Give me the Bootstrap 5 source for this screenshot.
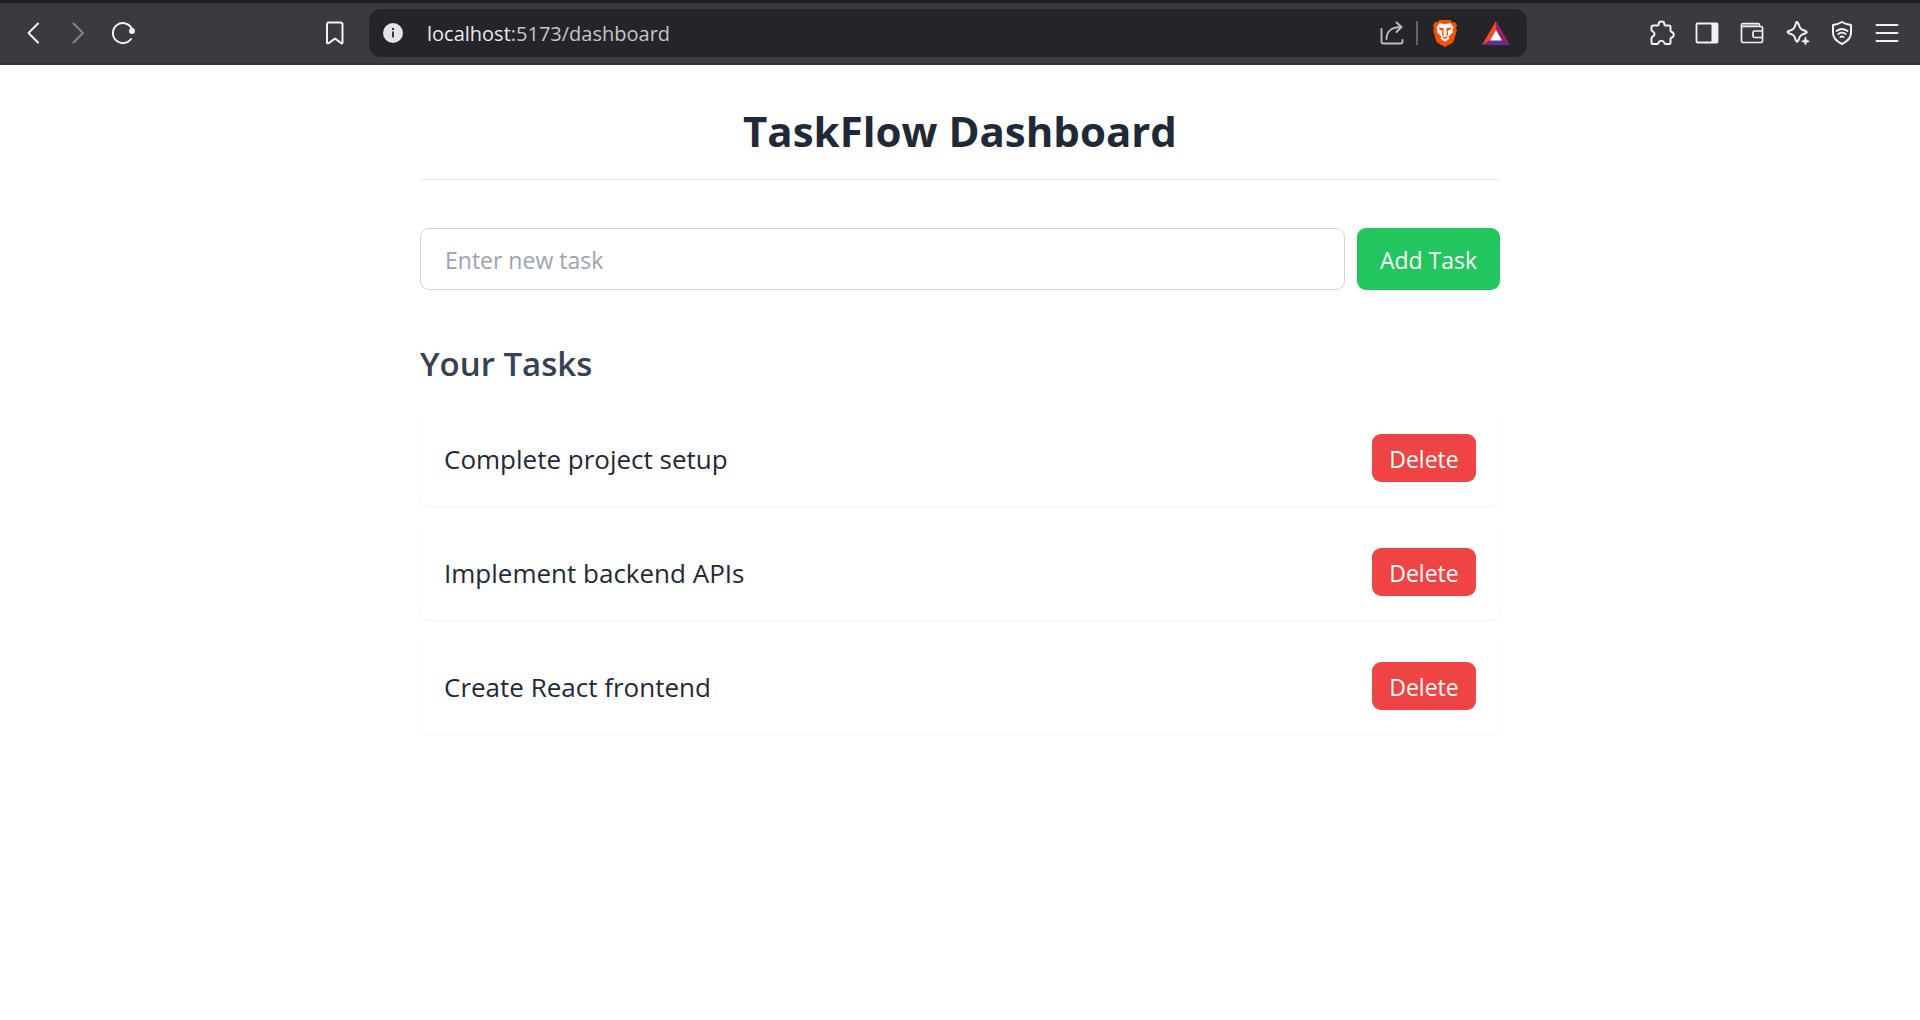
<!DOCTYPE html>
<html lang="en">
<head>
<meta charset="utf-8">
<meta name="viewport" content="width=device-width, initial-scale=1">
<title>TaskFlow Dashboard</title>
<link href="https://cdn.jsdelivr.net/npm/bootstrap@5.3.0/dist/css/bootstrap.min.css" rel="stylesheet">
<style>
  body { font-family: "Open Sans", "Noto Sans", sans-serif; background: #fff; color: #1f2937; }
  .browser-bar { height: 65px; padding: 0 11px 0 10px; background: #3b3a3f; border-top: 3px solid #1f1e23; border-bottom: 2px solid #33323a; }
  .tool-btn { width: 45px; height: 45px; color: #f2f1f5; background: none; border: 0; padding: 0; display: flex; align-items: center; justify-content: center; flex: none; }
  .tool-btn:disabled { color: #85848a; }
  .address-zone { margin: 0 112px 0 167px; gap: 12px; min-width: 0; }
  .address-bar { height: 48px; border-radius: 12px; background: #252429; padding: 0 17px 0 14px; min-width: 0; }
  .address-text { color: #c5c4ca; font-size: 20px; line-height: 28px; padding-top: 2px; }
  .address-host { color: #e9e8ee; }
  .bar-split { width: 2px; height: 24px; margin: 0 14px 0 12px; background: #66656b; }
  .stroke-icon { fill: none; stroke: currentColor; stroke-width: 2; stroke-linecap: round; stroke-linejoin: round; }
  .page-main { max-width: 1080px; padding-top: 36px; }
  .page-head { border-bottom: 1px solid #e5e7eb; padding-bottom: 18px; margin-bottom: 48px; }
  .page-title { font-size: 42px; line-height: 60px; font-weight: 700; margin: 0; }
  .task-form { gap: 12px; margin-bottom: 48px; }
  .task-input { height: 62px; padding: 2px 24px 0; font-size: 23px; border: 1px solid #d1d5db; border-radius: 9px; color: #1f2937; }
  .task-input::placeholder { color: #9ca3af; }
  .add-btn { width: 143px; height: 62px; padding: 2px 0 0; font-size: 23px; border: 0; border-radius: 9px; background: #22c55e; color: #fff; }
  .section-title { font-size: 33px; line-height: 48px; font-weight: 600; color: #374151; margin: 0; padding: 2px 0 22px; }
  .task-list { gap: 18px; }
  .task-card { height: 96px; padding: 0 24px; border-radius: 9px; background: #fff; box-shadow: 0 1px 3px rgba(0,0,0,.05); font-size: 26px; line-height: 36px; }
  .task-name { padding-top: 2px; }
  .delete-btn { width: 104px; height: 48px; padding: 2px 0 0; font-size: 23px; border: 0; border-radius: 9px; background: #ef4444; color: #fff; }
  .add-btn:hover, .delete-btn:hover { color: #fff; filter: brightness(.94); }
</style>
<script src="https://cdn.jsdelivr.net/npm/bootstrap@5.3.0/dist/js/bootstrap.bundle.min.js" defer></script>
</head>
<body>
<header class="browser-bar d-flex align-items-center">
  <div class="d-flex">
    <button class="tool-btn" type="button" aria-label="Back"><svg class="stroke-icon" width="24" height="24" viewBox="0 0 24 24"><path d="M17 2.500 7.500 12l9.500 9.500"/></svg></button>
    <button class="tool-btn" type="button" aria-label="Forward" disabled><svg class="stroke-icon" width="24" height="24" viewBox="0 0 24 24"><path d="M7.500 2.500 17 12l-9.500 9.500"/></svg></button>
    <button class="tool-btn" type="button" aria-label="Reload"><svg class="stroke-icon" width="26" height="26" viewBox="0 0 26 26"><path d="M21.500 8A10 10 0 1 0 21 19"/><circle cx="22" cy="11" r="2.200" fill="currentColor" stroke-width="1.500"/></svg></button>
  </div>
  <div class="address-zone d-flex align-items-center flex-grow-1">
    <button class="tool-btn" type="button" aria-label="Bookmark"><svg class="stroke-icon" width="24" height="24" viewBox="0 0 24 24"><path d="M5.500 1.500h12q2 0 2 2v18q0 1.500-1.300.6L12 17.500l-6.200 4.600q-1.800.9-1.800-.6v-18q0-2 1.500-2z"/></svg></button>
    <div class="address-bar d-flex align-items-center flex-grow-1">
      <button class="border-0 bg-transparent p-0 d-flex me-4" type="button" aria-label="Site information"><svg width="20" height="20" viewBox="0 0 20 20"><circle cx="10" cy="10" r="10" fill="#e4e3e9"/><path d="M9 8.500h2v6H9zM9 5h2v2H9z" fill="#39383e"/></svg></button>
      <div class="address-text flex-grow-1 text-nowrap"><a class="text-reset text-decoration-none" href="#"><span class="address-host">localhost</span>:5173/dashboard</a></div>
      <div class="d-flex align-items-center">
        <button class="border-0 bg-transparent p-0 d-flex" type="button" aria-label="Share"><svg width="24" height="24" viewBox="0 0 24 24" fill="none" stroke="#bdbcc2" stroke-width="1.900" stroke-linecap="round" stroke-linejoin="round"><path d="M1.500 8v12.500q0 2 2 2h17q2 0 2-2V19M6.500 18c0-7 4.500-12 14.500-12M16.500 1.500 21.500 6l-5 5"/></svg></button>
        <span class="bar-split"></span>
        <button class="border-0 bg-transparent p-0 d-flex me-2" type="button" aria-label="Brave Shields"><svg width="26" height="28" viewBox="0 0 26 28"><path d="M7.500 1h11l2 2.200 2.500-.3 2 3.600-1 2.500.8 2.500-3 10.500q-.5 1.300-2 2.300L13 28l-6.800-3.700q-1.500-1-2-2.300L1.200 11.500 2 9 1 6.500 3 2.900l2.500.3z" fill="#fb4f06"/><path d="m13 5 5.500-.8 3 4-1 3 .5 2-4.500 4.300 1 2.300-4.500 3-4.500-3 1-2.300L5 13.200l.5-2-1-3 3-4z" fill="#fff"/><path d="m6.500 8.500 4.500.6.800 1-.6 4.400.8 1.500-1.500.8-.7-2 .5-3-2.800-1.300zM19.500 8.500l-4.500.6-.8 1 .6 4.400-.8 1.500 1.500.8.700-2-.5-3 2.800-1.300zM10 17l3 1.200 3-1.200-.7 1.600L13 20l-2.300-1.400z" fill="#fb4f06"/></svg></button>
        <button class="border-0 bg-transparent p-0 d-flex ms-3" type="button" aria-label="Brave Rewards"><svg width="28" height="24" viewBox="0 0 28 24"><path d="M14 0v9L8 19.500 0 24z" fill="#ff4724"/><path d="M14 0v9l6 10.500 8 4.500z" fill="#9e1f63"/><path d="m0 24 9-5h10l9 5z" fill="#662d91"/><path d="m14 9 6 10.500H8z" fill="#fff"/></svg></button>
      </div>
    </div>
  </div>
  <div class="d-flex">
    <button class="tool-btn" type="button" aria-label="Extensions"><svg class="stroke-icon" width="26" height="26" viewBox="0 0 26 26"><path d="M4 5.500h4.500c1 0 1.200-.6 1.200-1.500 0-3.200 5.600-3.200 5.600 0 0 .9.200 1.500 1.200 1.500H20q1.500 0 1.500 1.500v3.500c0 1 .4 1.300 1.200 1.500 2.700.8 2.700 4.700 0 5.500-.8.200-1.200.5-1.200 1.500v3.500q0 1.500-1.500 1.500h-3.500c-.8 0-1-.5-1.300-1.300-1-2.700-4.700-2.700-5.700 0-.3.800-.5 1.300-1.300 1.300H4q-1.500 0-1.500-1.500V18c0-.8.500-1 1.200-1.300 2.400-1 2.400-4.400 0-5.400-.7-.3-1.200-.5-1.200-1.300V7Q2.500 5.500 4 5.500z"/></svg></button>
    <button class="tool-btn" type="button" aria-label="Side panel"><svg width="24" height="22" viewBox="0 0 24 22"><rect x="1.500" y="1.500" width="21" height="19" rx="1" fill="none" stroke="currentColor" stroke-width="1.800"/><path d="M16.500 1H23v20h-6.500z" fill="currentColor"/></svg></button>
    <button class="tool-btn" type="button" aria-label="Wallet"><svg class="stroke-icon" width="24" height="22" viewBox="0 0 24 22"><path d="M1.500 4.500V19q0 1.500 1.500 1.500h18q1.500 0 1.500-1.500V6q0-1.500-1.500-1.500zM1.500 4.500V3q0-1.500 1.500-1.500h15q1.500 0 1.500 1.500v1.500M22 9h-7.500Q13 9 13 10.500V14q0 1.500 1.500 1.500H22" stroke-width="1.700"/><path d="M3 3h15" stroke="#a5a4aa"/></svg></button>
    <button class="tool-btn" type="button" aria-label="Leo AI"><svg class="stroke-icon" width="26" height="26" viewBox="0 0 26 26"><path d="M12 2.500q1.500-1.500 2.500 1.500c1.500 5 2.500 5.500 7 7q2.500 1.200 0 2.200c-4.500 1.500-5.500 2-7 7q-1.200 3-2.700 0c-1.500-5-2.500-5.500-7-7q-2.500-1.200 0-2.200c4.500-1.500 5.500-2 7-7z"/><path d="m21.500 17 1.200 3 2.800 1.200-2.800 1.200-1.200 2.800-1.200-2.800-2.800-1.200 2.800-1.200z" fill="currentColor" stroke-width=".5"/></svg></button>
    <button class="tool-btn" type="button" aria-label="VPN"><svg class="stroke-icon" width="22" height="26" viewBox="0 0 22 26"><path d="M11 2q4.500 2.700 9 3v8c0 5-4 8.500-9 11-5-2.500-9-6-9-11V5q4.500-.3 9-3z"/><path d="M5.500 11q5.500-4 11 0M7.300 14q3.700-2.600 7.400 0" stroke-width="1.800"/><path d="M9.500 17q1.500-1 3 0" /></svg></button>
    <button class="tool-btn" type="button" aria-label="Menu"><svg class="stroke-icon" width="24" height="20" viewBox="0 0 24 20"><path d="M1.500 2h21M1.500 10h21M1.500 18h21"/></svg></button>
  </div>
</header>

<main class="container-fluid page-main px-0">
  <header class="page-head text-center">
    <h1 class="page-title">TaskFlow Dashboard</h1>
  </header>
  <form class="task-form d-flex" onsubmit="return false">
    <input class="form-control task-input" id="newTask" type="text" placeholder="Enter new task" aria-label="Enter new task">
    <button class="btn add-btn flex-shrink-0" type="submit">Add Task</button>
  </form>
  <h2 class="section-title">Your Tasks</h2>
  <ul class="task-list list-unstyled d-flex flex-column">
    <li class="task-card d-flex align-items-center justify-content-between"><span class="task-name">Complete project setup</span><button class="btn delete-btn" type="button">Delete</button></li>
    <li class="task-card d-flex align-items-center justify-content-between"><span class="task-name">Implement backend APIs</span><button class="btn delete-btn" type="button">Delete</button></li>
    <li class="task-card d-flex align-items-center justify-content-between"><span class="task-name">Create React frontend</span><button class="btn delete-btn" type="button">Delete</button></li>
  </ul>
</main>
</body>
</html>
